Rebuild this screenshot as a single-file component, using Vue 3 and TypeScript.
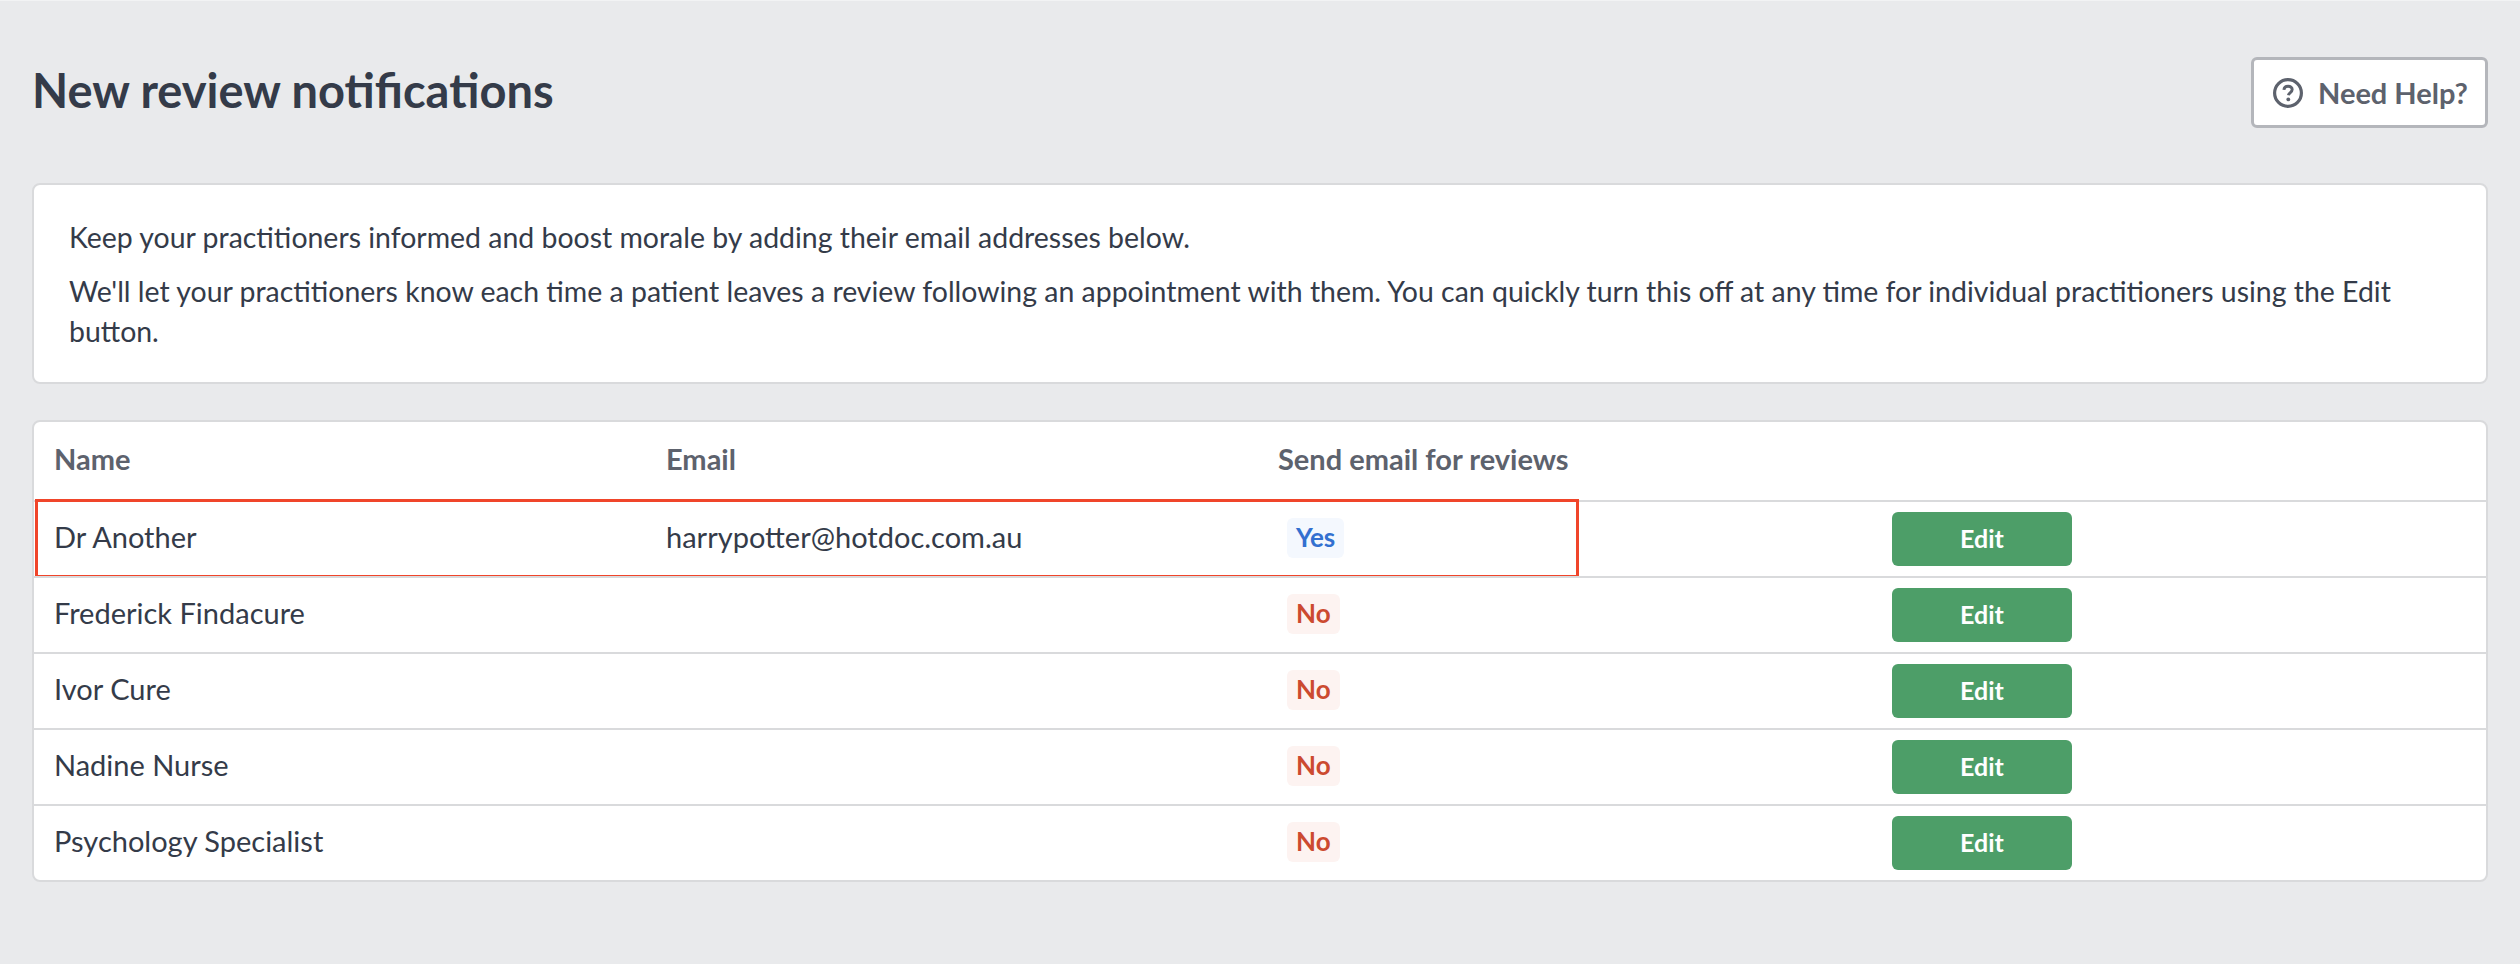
<script setup lang="ts">
interface Row { name: string; email: string; on: boolean }
const rows: Row[] = [
  { name: 'Dr Another', email: 'harrypotter@hotdoc.com.au', on: true },
  { name: 'Frederick Findacure', email: '', on: false },
  { name: 'Ivor Cure', email: '', on: false },
  { name: 'Nadine Nurse', email: '', on: false },
  { name: 'Psychology Specialist', email: '', on: false },
]
</script>

<template>
  <div class="page">
    <header class="head">
      <h1 class="title">New review notifications</h1>
      <button class="help" type="button">
        <svg class="help-icon" viewBox="0 0 30 30" aria-hidden="true">
          <circle cx="15" cy="15" r="13.4" fill="none" stroke="currentColor" stroke-width="3.2" />
          <path d="M10.9 11.8c.2-2.3 1.9-3.6 4.2-3.6 2.4 0 4.1 1.4 4.1 3.4 0 2.8-3.4 2.9-3.8 5.6" fill="none" stroke="currentColor" stroke-width="2.9" />
          <circle cx="15.3" cy="21.4" r="1.9" fill="currentColor" />
        </svg>
        <span>Need Help?</span>
      </button>
    </header>

    <section class="card intro">
      <p>Keep your practitioners informed and boost morale by adding their email addresses below.</p>
      <p>We'll let your practitioners know each time a patient leaves a review following an appointment with them. You can quickly turn this off at any time for individual practitioners using the Edit button.</p>
    </section>

    <section class="card table">
      <div class="row thead">
        <div class="text">Name</div>
        <div class="text">Email</div>
        <div class="text">Send email for reviews</div>
        <div></div>
      </div>
      <div v-for="(r, i) in rows" :key="r.name" class="row body">
        <div class="text">{{ r.name }}</div>
        <div class="text">{{ r.email }}</div>
        <div class="chip-cell"><span class="chip" :class="r.on ? 'yes' : 'no'">{{ r.on ? 'Yes' : 'No' }}</span></div>
        <div><button class="edit" type="button">Edit</button></div>
        <div v-if="i === 0" class="highlight"></div>
      </div>
    </section>
  </div>
</template>

<style>
html, body { margin: 0; background: #e9eaec; }
</style>

<style scoped>
.page {
  box-sizing: border-box;
  min-height: 964px;
  padding: 2px 32px 0;
  background: #e9eaec;
  border-top: 1px solid #f2f3f4;
  font-family: Lato, "Liberation Sans", sans-serif;
  color: #343b49;
}
.head {
  display: flex;
  align-items: center;
  justify-content: space-between;
  height: 180px;
}
.title {
  margin: -7px 0 0;
  font-size: 47px;
  font-weight: 700;
  line-height: 56px;
  color: #343b49;
}
.help {
  display: flex;
  align-items: center;
  gap: 15px;
  box-sizing: border-box;
  width: 237px;
  height: 71px;
  margin-top: -1px;
  padding: 0 12px 0 19px;
  background: #fff;
  border: 3px solid #b4b6bb;
  border-radius: 6px;
  font: 700 29px Lato, sans-serif;
  color: #5d626d;
  white-space: nowrap;
}
.help-icon { width: 30px; height: 30px; flex: none; }
.card {
  background: #fff;
  border: 2px solid #d9dadc;
  border-radius: 8px;
}
.intro {
  box-sizing: border-box;
  height: 201px;
  padding: 32px 35px 0;
  font-size: 28.45px;
  line-height: 40px;
}
.intro p { margin: 0 0 14px; }
.table { margin-top: 36px; }
.row {
  position: relative;
  display: grid;
  grid-template-columns: 612px 612px 612px 1fr;
  align-items: center;
  padding-left: 20px;
  font-size: 29px;
}
.text { padding-bottom: 5px; }
.chip-cell { padding-bottom: 3px; }
.thead {
  height: 78px;
  font-weight: 700;
  color: #5d626d;
}
.body {
  height: 74px;
  border-top: 2px solid #d9dadc;
}
.chip {
  display: inline-block;
  margin-left: 9px;
  padding: 3px 9px 5px;
  border-radius: 6px;
  font-size: 26px;
  line-height: 32px;
  font-weight: 700;
}
.yes { background: #f4f8fe; color: #3370d0; }
.no { background: #fdf3f1; color: #cc4a30; }
.edit {
  width: 180px;
  height: 54px;
  margin-left: 2px;
  padding: 0 0 2px;
  border: 0;
  border-radius: 6px;
  background: #4d9e68;
  color: #fff;
  font: 700 25px Lato, sans-serif;
}
.highlight {
  position: absolute;
  left: 1px;
  top: -3px;
  box-sizing: border-box;
  width: 1544px;
  height: 79px;
  border: 3px solid #f0452a;
  pointer-events: none;
}
</style>
